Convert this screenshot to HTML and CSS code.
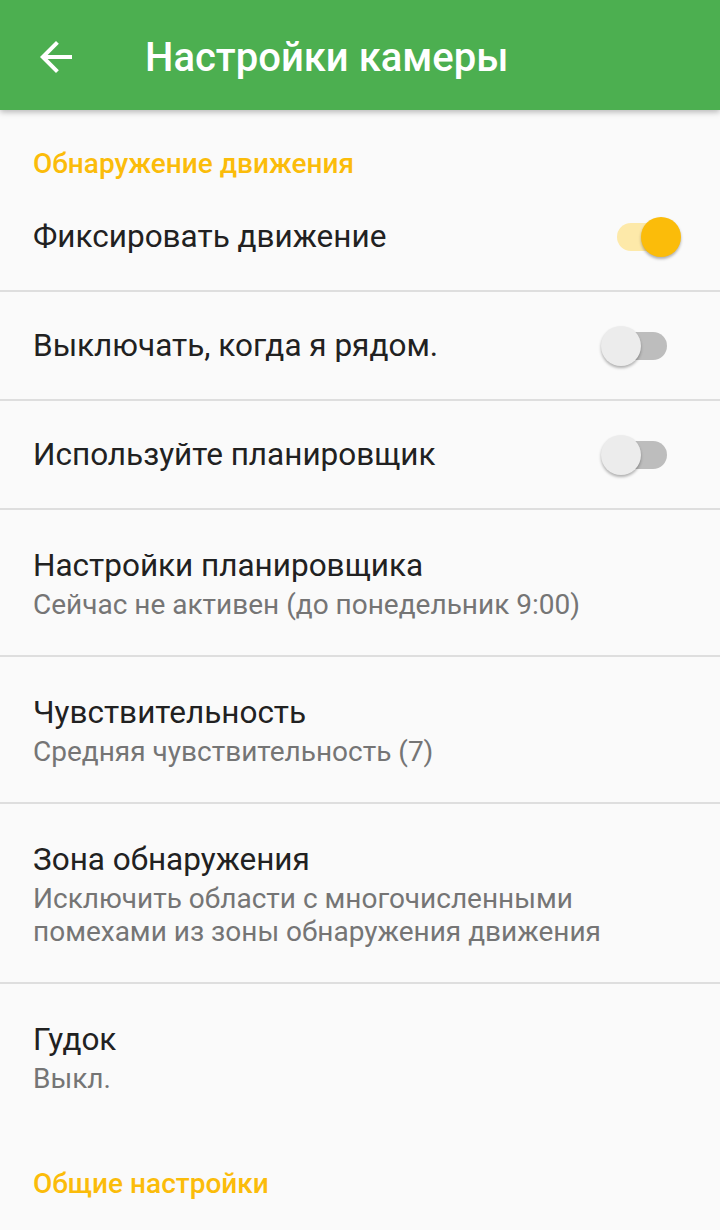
FILE: index.html
```html
<!DOCTYPE html>
<html>
<head>
	<meta charset="utf-8">
	<title>Настройки камеры</title>
	<link rel="stylesheet" href="styles.css">
</head>
<body>
	<div class="toolbar">
		<svg class="back" viewBox="0 0 24 24" width="48" height="48"><path d="M20 11H7.83l5.59-5.59L12 4l-8 8 8 8 1.41-1.41L7.83 13H20v-2z" fill="#fff"/></svg>
		<div class="toolbar-title">Настройки камеры</div>
	</div>
	<div class="list">
		<div class="category">Обнаружение движения</div>
		<div class="row">
			<div class="text"><div class="title">Фиксировать движение</div></div>
			<span class="switch on"><span class="track"></span><span class="thumb"></span></span>
		</div>
		<div class="row">
			<div class="text"><div class="title">Выключать, когда я рядом.</div></div>
			<span class="switch"><span class="track"></span><span class="thumb"></span></span>
		</div>
		<div class="row">
			<div class="text"><div class="title">Используйте планировщик</div></div>
			<span class="switch"><span class="track"></span><span class="thumb"></span></span>
		</div>
		<div class="row">
			<div class="text">
				<div class="title">Настройки планировщика</div>
				<div class="sub">Сейчас не активен (до понедельник 9:00)</div>
			</div>
		</div>
		<div class="row">
			<div class="text">
				<div class="title">Чувствительность</div>
				<div class="sub">Средняя чувствительность (7)</div>
			</div>
		</div>
		<div class="row">
			<div class="text">
				<div class="title">Зона обнаружения</div>
				<div class="sub">Исключить области с многочисленными<br>помехами из зоны обнаружения движения</div>
			</div>
		</div>
		<div class="row last">
			<div class="text">
				<div class="title">Гудок</div>
				<div class="sub">Выкл.</div>
			</div>
		</div>
		<div class="category">Общие настройки</div>
	</div>
</body>
</html>
```

FILE: styles.css
```css
* { margin: 0; padding: 0; box-sizing: border-box; }
body { background: #fafafa; font-family: Roboto, "Noto Sans", sans-serif; width: 720px; height: 1230px; overflow: hidden; }

.toolbar { height: 110px; background: #4caf50; display: flex; align-items: center; padding-left: 32px; box-shadow: 0 2px 6px rgba(0,0,0,.28); position: relative; z-index: 2; }
.back { margin-top: 4px; }
.toolbar-title { color: #fff; font-size: 40px; font-weight: 500; margin-left: 65px; margin-top: 4px; }

.category { color: #fbbc0a; font-size: 28px; font-weight: 500; line-height: 32px; padding: 38px 33px 3px; }
.category:last-child { padding-top: 39px; }

.row { display: flex; align-items: center; padding: 35px 39px 34px 33px; border-bottom: 2px solid #dedede; }
.row.last { border-bottom: none; }
.text { flex: 1; }
.title { color: #212121; font-size: 31.5px; line-height: 38px; }
.sub { color: #757575; font-size: 28px; line-height: 33px; margin-top: 3px; }
.row:has(.sub) { padding-top: 37px; }

.switch { position: relative; width: 80px; height: 38px; }
.track { position: absolute; left: 16px; top: 5px; width: 50px; height: 28px; border-radius: 14px; background: #bdbdbd; }
.thumb { position: absolute; left: 0; top: -1px; width: 40px; height: 40px; border-radius: 50%; background: #ececec; box-shadow: 0 2px 3px rgba(0,0,0,.3); }
.switch.on .track { background: #fde9a9; }
.switch.on .thumb { left: 40px; background: #fbbc0a; }
```
